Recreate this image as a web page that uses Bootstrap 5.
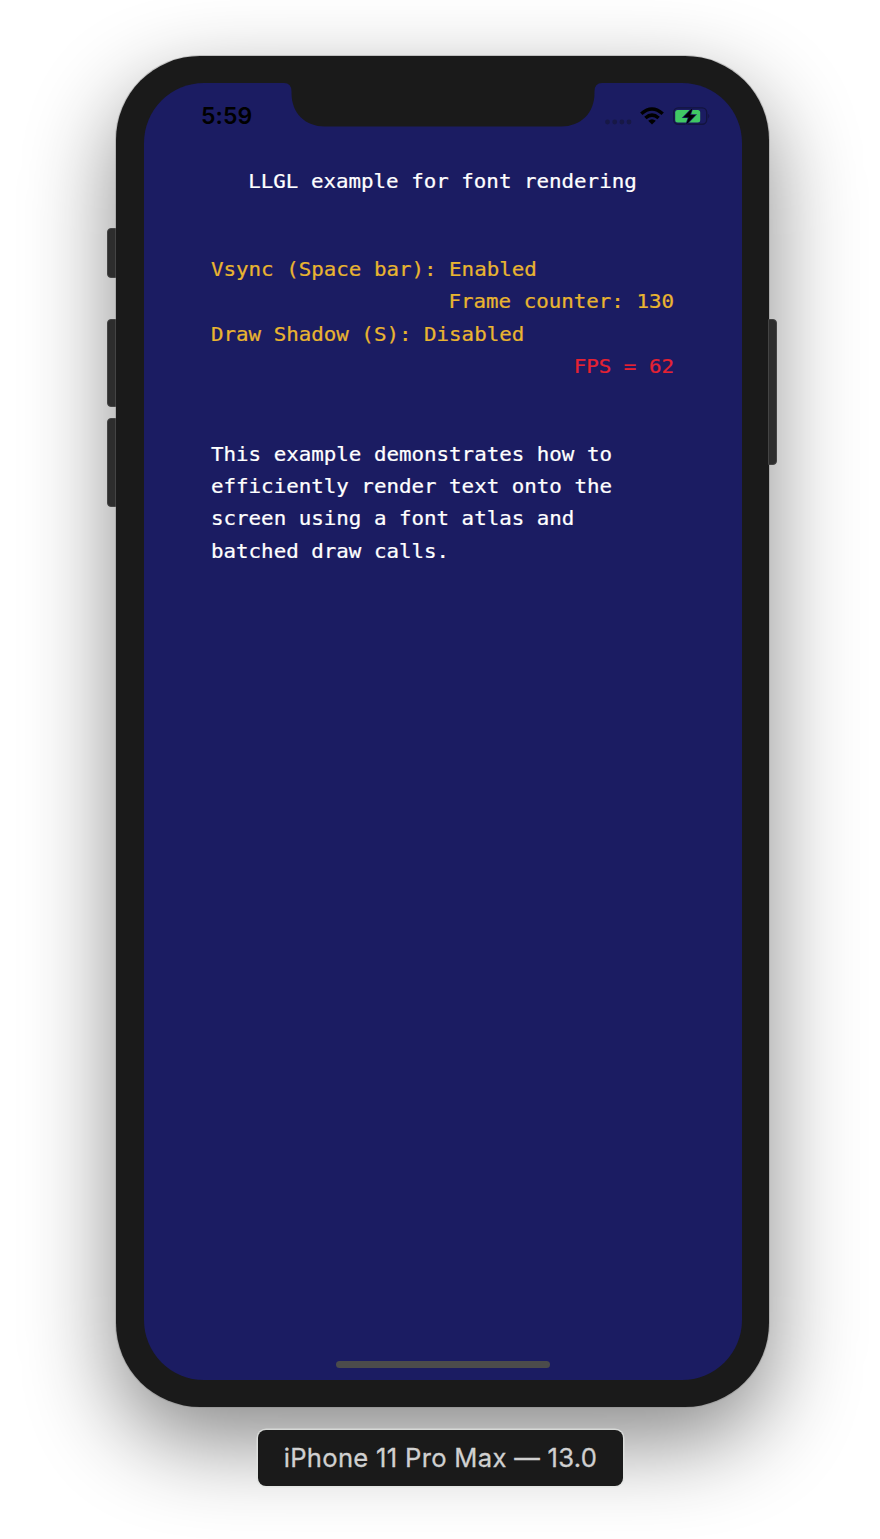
<!DOCTYPE html>
<html lang="en">
<head>
<meta charset="utf-8">
<meta name="viewport" content="width=device-width, initial-scale=1">
<title>iPhone 11 Pro Max — 13.0</title>
<link href="https://cdn.jsdelivr.net/npm/bootstrap@5.3.0/dist/css/bootstrap.min.css" rel="stylesheet">
<style>
body { background: #fff; min-height: 1539px; overflow: hidden; }
.device { width: 653px; height: 1351px; margin: 56px 0 0 4px; padding: 27px 27px 27px 28px; background: #1a1a1a; border-radius: 84px; box-shadow: 0 0 0 1px #8a8a8a66, 0 34px 90px rgba(0,0,0,.47); }
.screen { background: #1b1c62; border-radius: 60px; }
.side-key { width: 9px; background: #2d2d2d; border: 1px solid #444; border-radius: 4px 0 0 4px; left: -9px; }
.side-key.power { left: auto; right: -8px; border-radius: 0 4px 4px 0; }
.status { height: 65px; padding: 0 32px 0 57.5px; }
.clock { font: 600 23px/64px Inter, sans-serif; color: #000; letter-spacing: .1px; }
.notch { left: 140px; top: -1px; }
.console { padding: 18px 67.5px 0; font: 20.82px/32.3px "DejaVu Sans Mono", monospace; color: #fff; -webkit-text-stroke: .25px currentColor; }
.console div { height: 32.3px; white-space: pre; transform: scaleY(.92); }
.info { margin-top: 55.7px; color: #e9b530; }
.fps { color: #e62232; }
.about { margin-top: 55.7px; }
.home-bar { width: 214px; height: 7px; background: #4b4b4b; left: 192px; bottom: 12px; }
.device-label { width: 365px; height: 56px; margin: 23px 0 0 1px; background: #1a1a1a; color: #d0d0d0; border-radius: 8px; box-shadow: 0 0 0 1.5px rgba(225,228,225,.75); font: 25.6px/56px Inter, sans-serif; letter-spacing: .3px; z-index: 1; -webkit-text-stroke: .3px currentColor; }
</style>
</head>
<body class="d-flex flex-column align-items-center">
<main class="device position-relative flex-shrink-0">
  <span class="side-key position-absolute" style="top:172px;height:50px"></span>
  <span class="side-key position-absolute" style="top:263px;height:88px"></span>
  <span class="side-key position-absolute" style="top:362px;height:89px"></span>
  <span class="side-key power position-absolute" style="top:263px;height:146px"></span>
  <section class="screen position-relative h-100 overflow-hidden">
    <svg class="notch position-absolute" width="320" height="46" viewBox="0 0 320 46"><path fill="#1a1a1a" d="M0 0H318V1Q310.500 1 310.500 9.500V11C310.500 31 297 44.500 277 44.500H41C21 44.500 7.500 31 7.500 11V9.500Q7.500 1 0 1Z"/></svg>
    <header class="status d-flex align-items-center justify-content-between">
      <span class="clock">5:59</span>
      <svg width="106" height="22" viewBox="0 0 106 22">
        <g fill="#171846"><circle cx="3.500" cy="17" r="2.400"/><circle cx="10.700" cy="17" r="2.400"/><circle cx="17.900" cy="17" r="2.400"/><circle cx="25" cy="17" r="2.400"/></g>
        <g fill="none" stroke="#000" stroke-width="3.500"><path d="M37.300 8.800Q48 -.700 58.700 8.800"/><path d="M41.400 13Q48 7.100 54.600 13"/></g>
        <path d="M44.200 15.800Q48 12.700 51.800 15.800L48 19.600Z"/>
        <rect x="69.700" y="2.900" width="33" height="16.400" rx="4.500" fill="none" stroke="#13143f" stroke-width="1.400"/>
        <path d="M104.300 8.700q2 2.200 0 4.800Z" fill="#13143f"/>
        <rect x="71.200" y="4.900" width="25" height="12.500" rx="2.500" fill="#40c864"/>
        <path d="M88.500 2.900 79.500 12.200h5.200l-2.600 7.500 9.200-9.600h-5.200Z" stroke="#1b1c62" stroke-width="1.500" paint-order="stroke"/>
      </svg>
    </header>
    <div class="console">
      <div class="text-center">LLGL example for font rendering</div>
      <section class="info">
        <div>Vsync (Space bar): Enabled</div>
        <div class="text-end">Frame counter: 130</div>
        <div>Draw Shadow (S): Disabled</div>
        <div class="text-end fps">FPS = 62</div>
      </section>
      <section class="about">
        <div>This example demonstrates how to</div>
        <div>efficiently render text onto the</div>
        <div>screen using a font atlas and</div>
        <div>batched draw calls.</div>
      </section>
    </div>
    <span class="home-bar position-absolute rounded-pill"></span>
  </section>
</main>
<footer class="device-label position-relative flex-shrink-0 text-center">iPhone 11 Pro Max — 13.0</footer>
<script src="https://cdn.jsdelivr.net/npm/bootstrap@5.3.0/dist/js/bootstrap.bundle.min.js"></script>
</body>
</html>
